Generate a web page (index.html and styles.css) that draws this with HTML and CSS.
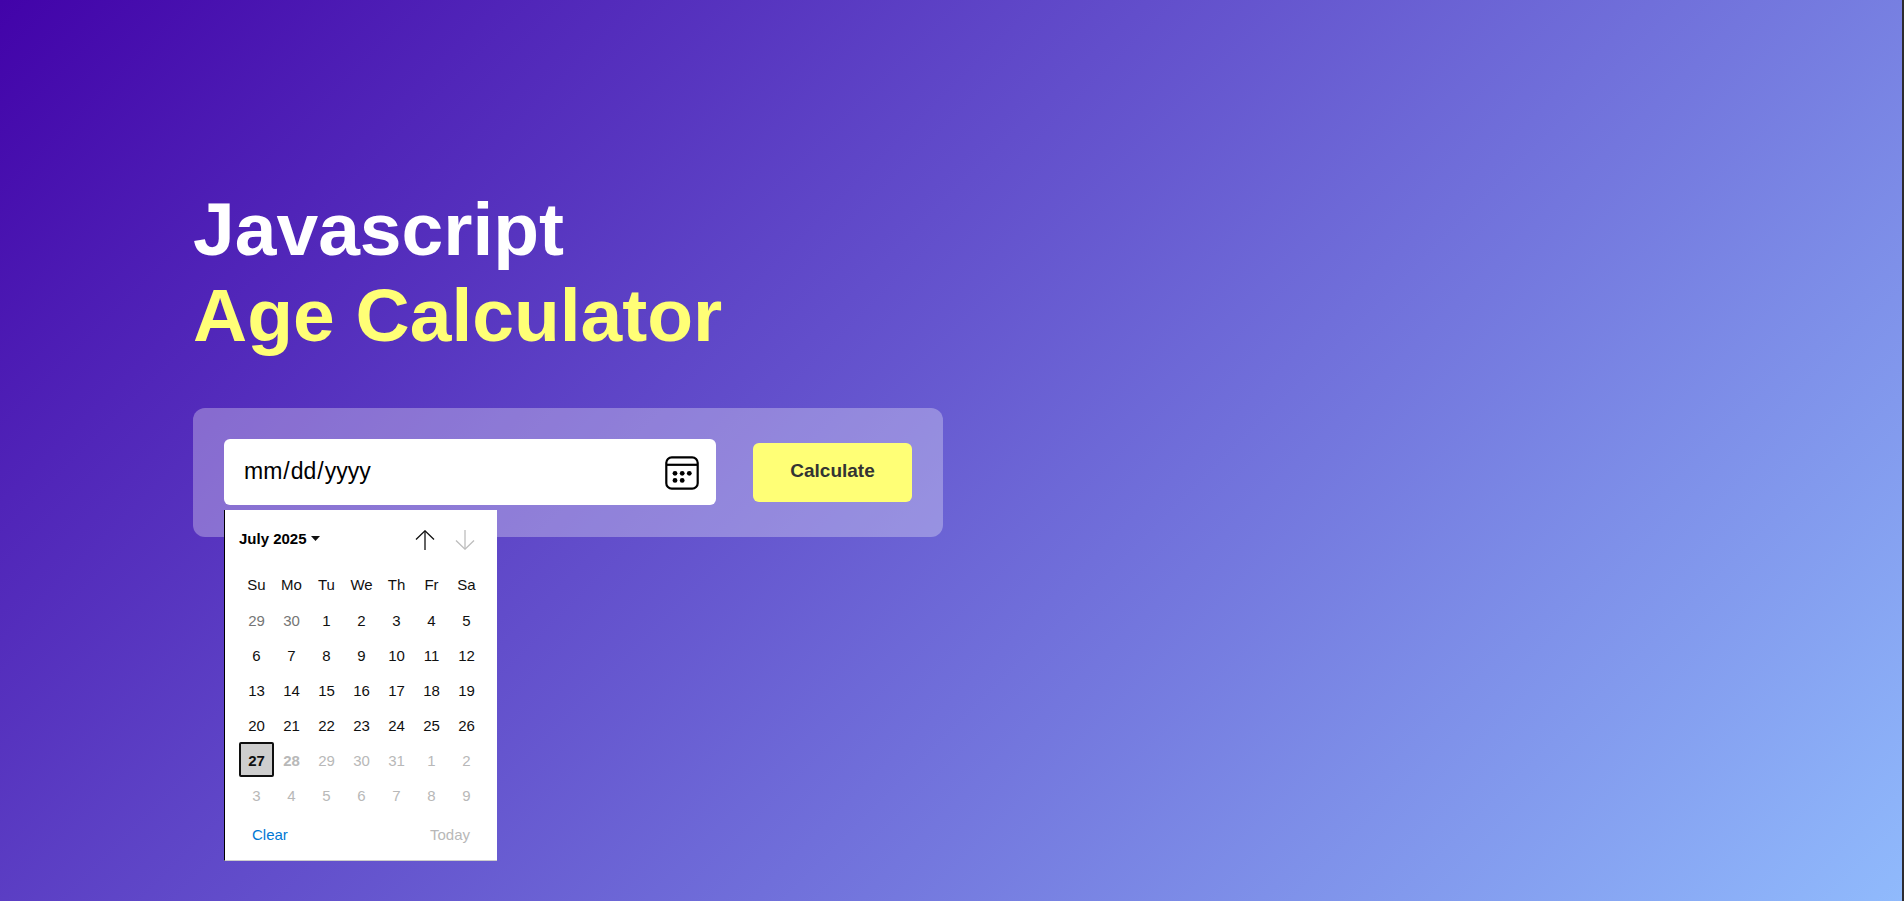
FILE: index.html
```html
<!DOCTYPE html>
<html lang="en-US">
<head>
<meta charset="utf-8">
<title>Age Calculator</title>
<link rel="stylesheet" href="styles.css">
</head>
<body>
<main class="container">
  <div class="calculator">
    <h1 class="title">Javascript<br><span class="title-accent">Age Calculator</span></h1>
    <form class="input-box">
      <div class="date-field">
        <input class="date-input" type="date" id="date" aria-label="Date of birth">
        <svg class="date-icon" viewBox="0 0 34 34" aria-hidden="true">
          <rect x="1.3" y="1.3" width="31.4" height="31.4" rx="5.5" fill="none" stroke="#000" stroke-width="2.2"/>
          <path d="M1 8.8H33" stroke="#000" stroke-width="2.2"/>
          <g fill="#000">
            <circle cx="10" cy="17.3" r="2.4"/><circle cx="17.2" cy="17.3" r="2.4"/><circle cx="24.3" cy="17.3" r="2.4"/>
            <circle cx="10" cy="24.4" r="2.4"/><circle cx="17.2" cy="24.4" r="2.4"/>
          </g>
        </svg>
        <div class="picker">
          <div class="picker-head">
            <button class="month" type="button">July 2025
              <svg class="caret" viewBox="0 0 9 5" aria-hidden="true"><path d="M0 0H9L4.5 5Z" fill="#101010"/></svg>
            </button>
            <button class="nav" type="button" aria-label="Previous month">
              <svg class="arrow" viewBox="0 0 20 20" aria-hidden="true" fill="none" stroke="#101010"><path d="M1 9.5L10 .8L19 9.5" stroke-width="1.3"/><path d="M10 1V20" stroke-width="1.3"/></svg>
            </button>
            <button class="nav" type="button" aria-label="Next month" disabled>
              <svg class="arrow" viewBox="0 0 20 20" aria-hidden="true" fill="none" stroke="#bdbdbd"><path d="M1 10.5L10 19.2L19 10.5" stroke-width="1.3"/><path d="M10 0V19" stroke-width="1.3"/></svg>
            </button>
          </div>
          <table class="days">
            <thead><tr><th>Su</th><th>Mo</th><th>Tu</th><th>We</th><th>Th</th><th>Fr</th><th>Sa</th></tr></thead>
            <tbody>
              <tr><td class="outside">29</td><td class="outside">30</td><td>1</td><td>2</td><td>3</td><td>4</td><td>5</td></tr>
              <tr><td>6</td><td>7</td><td>8</td><td>9</td><td>10</td><td>11</td><td>12</td></tr>
              <tr><td>13</td><td>14</td><td>15</td><td>16</td><td>17</td><td>18</td><td>19</td></tr>
              <tr><td>20</td><td>21</td><td>22</td><td>23</td><td>24</td><td>25</td><td>26</td></tr>
              <tr><td class="selected"><span class="selected-day">27</span></td><td class="off today">28</td><td class="off">29</td><td class="off">30</td><td class="off">31</td><td class="off">1</td><td class="off">2</td></tr>
              <tr><td class="off">3</td><td class="off">4</td><td class="off">5</td><td class="off">6</td><td class="off">7</td><td class="off">8</td><td class="off">9</td></tr>
            </tbody>
          </table>
          <div class="picker-foot">
            <button class="clear" type="button">Clear</button>
            <button class="go-today" type="button" disabled>Today</button>
          </div>
        </div>
      </div>
      <button class="calculate" type="button">Calculate</button>
    </form>
  </div>
</main>
</body>
</html>
```
FILE: styles.css
```css
* {
  margin: 0;
  padding: 0;
  box-sizing: border-box;
  font-family: "Liberation Sans", Arial, sans-serif;
}

button {
  border: 0;
  background: none;
}

.container {
  min-height: 100vh;
  padding: 186px 20px 0 193px;
  border-right: 2px solid #2d2b30;
  background: linear-gradient(135deg, #4203a9, #90bafc) padding-box;
}

.calculator {
  max-width: 750px;
}

.title {
  font-size: 75px;
  line-height: 86px;
  color: #fff;
}

.title-accent {
  color: #ffff76;
}

.input-box {
  display: flex;
  align-items: center;
  gap: 37px;
  margin-top: 50px;
  padding: 31px 31px 32px;
  border-radius: 12px;
  background: rgba(255, 255, 255, 0.3);
}

.date-field {
  position: relative;
  flex: 1;
}

.date-input {
  display: block;
  width: 100%;
  height: 66px;
  padding: 0 18px 1px 19px;
  border: 0;
  border-radius: 6px;
  outline: 0;
  background: #fff;
  color: #000;
  font-size: 23px;
}

.date-input::-webkit-calendar-picker-indicator {
  opacity: 0;
}

.date-icon {
  position: absolute;
  top: 17px;
  right: 17px;
  width: 34px;
  height: 34px;
  pointer-events: none;
}

.calculate {
  width: 159px;
  height: 59px;
  padding-bottom: 2px;
  border-radius: 6px;
  background: #ffff76;
  color: #333;
  font-size: 19px;
  font-weight: 700;
}

.picker {
  position: absolute;
  top: 71px;
  left: 0;
  width: 273px;
  padding: 14px 12px 8px 14px;
  border-left: 1px solid #000;
  border-bottom: 1px solid #ccc;
  background: #fff;
  font-size: 15px;
  color: #101010;
}

.picker-head {
  display: flex;
  align-items: center;
  height: 32px;
  margin-bottom: 11px;
}

.month {
  display: flex;
  align-items: center;
  gap: 4px;
  margin-right: auto;
  padding-bottom: 3px;
  font-size: 15px;
  font-weight: 700;
  color: #000;
}

.caret {
  width: 9px;
  height: 5px;
}

.nav {
  display: grid;
  place-items: center;
  width: 40px;
  height: 32px;
}

.arrow {
  width: 20px;
  height: 20px;
}

.days {
  border-collapse: collapse;
  table-layout: fixed;
  width: 245px;
}

.days th,
.days td {
  width: 35px;
  height: 35px;
  text-align: center;
  vertical-align: middle;
  font-weight: 400;
}

.days td {
  padding-top: 2px;
}

.days .selected {
  padding-top: 0;
}

.days .outside {
  color: #757575;
}

.days .off {
  color: #b8b8b8;
}

.days .today {
  font-weight: 700;
}

.selected-day {
  display: block;
  height: 35px;
  border: 2px solid #101010;
  border-radius: 2px;
  background: #cecece;
  font-weight: 700;
  line-height: 33px;
}

.picker-foot {
  display: flex;
  justify-content: space-between;
  height: 40px;
  padding: 5px 15px 0 13px;
}

.clear,
.go-today {
  height: 34px;
  font-size: 15px;
}

.clear {
  color: #0078d4;
}

.go-today {
  color: #b8b8b8;
}
```
